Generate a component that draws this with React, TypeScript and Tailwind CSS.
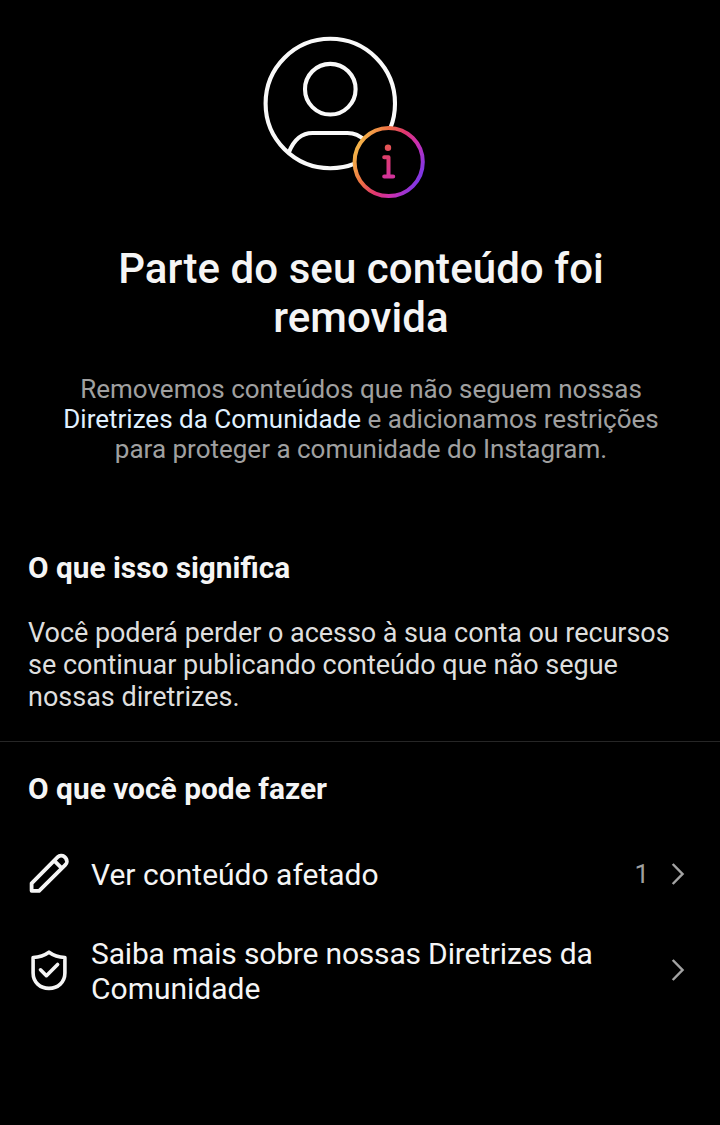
import type { ReactNode } from 'react';

function AccountNotice() {
  return (
    <svg width="190" height="180" viewBox="0 0 190 180" fill="none" role="img" aria-label="Aviso da conta">
      <defs>
        <linearGradient id="ring" gradientUnits="userSpaceOnUse" x1="104" y1="120" x2="173" y2="154">
          <stop offset="0" stopColor="#f5c04a" />
          <stop offset="0.3" stopColor="#ee7043" />
          <stop offset="0.52" stopColor="#e0366f" />
          <stop offset="0.74" stopColor="#c92fb4" />
          <stop offset="1" stopColor="#7038ee" />
        </linearGradient>
        <linearGradient id="glyph" gradientUnits="userSpaceOnUse" x1="134" y1="120" x2="142" y2="152">
          <stop offset="0" stopColor="#e65a50" />
          <stop offset="0.45" stopColor="#dd3a72" />
          <stop offset="1" stopColor="#d2339c" />
        </linearGradient>
      </defs>
      <g stroke="#f9f9f9" strokeWidth="4.1">
        <circle cx="80.3" cy="78.5" r="64.7" />
        <circle cx="80.3" cy="64.2" r="25.3" />
        <path d="M38.8 127.5C43.5 115.5 51 108 62.5 108H97.5C104.5 108 110 110.5 114.5 115.5" />
      </g>
      <circle cx="138.7" cy="137" r="34.1" fill="#000" stroke="url(#ring)" strokeWidth="4" />
      <circle cx="138" cy="122.7" r="3.2" fill="url(#glyph)" />
      <path
        d="M134.2 132.3H138.5V151.6M134.2 151.6H143.2"
        stroke="url(#glyph)"
        strokeWidth="4"
        strokeLinecap="round"
        strokeLinejoin="round"
      />
    </svg>
  );
}

function PencilIcon() {
  return (
    <svg width="40" height="41" viewBox="0 0 40 41" fill="none" stroke="#f5f5f5" strokeWidth="3.8" strokeLinejoin="round">
      <path d="M2.6 37.8V30.4L28.6 4.2C30.6 2.2 33.4 2.2 35.2 3.6L36.8 5.2C38.4 7.2 38.2 9.9 36.3 11.8L10.1 37.8Z" />
      <path d="M25.2 7.6L32.9 15.3" />
    </svg>
  );
}

function ShieldIcon() {
  return (
    <svg width="40" height="41" viewBox="0 0 40 41" fill="none" stroke="#f5f5f5" strokeWidth="3.6" strokeLinejoin="round">
      <path d="M20 2.2C15.5 5.4 10 7.2 4.1 7.5V23C4.1 32 11 38.4 20 38.4S35.9 32 35.9 23V7.5C30 7.2 24.5 5.5 20 2.2Z" />
      <path d="M11.5 19.8L17.4 25.7L28.6 14.5" strokeLinecap="round" />
    </svg>
  );
}

function Chevron() {
  return (
    <svg width="14" height="24" viewBox="0 0 14 24" fill="none" stroke="#a3a3a3" strokeWidth="2.5">
      <path d="M1.7 2L11.5 12L1.7 22" />
    </svg>
  );
}

function Row({ icon, label, children }: { icon: ReactNode; label: ReactNode; children: ReactNode }) {
  return (
    <li className="flex items-start">
      {icon}
      <span className="ml-[22px] mt-1 grow text-[30px] leading-[35px]">{label}</span>
      {children}
    </li>
  );
}

export default function App() {
  return (
    <main className="h-[1125px] w-[720px] overflow-hidden bg-black font-[Roboto,sans-serif] text-[#f5f5f5]">
      <header className="flex flex-col items-center pt-[25px] text-center">
        <div className="mr-[30px]">
          <AccountNotice />
        </div>
        <h1 className="ml-[2px] mt-[39px] text-[42px] font-medium leading-[49px] tracking-[0.06px]">
          Parte do seu conteúdo foi
          <br />
          removida
        </h1>
        <p className="ml-[2px] mt-[32px] text-[26px] leading-[30px] text-[#a0a0a0]">
          Removemos conteúdos que não seguem nossas
          <br />
          <a className="text-[#e0f1ff]">Diretrizes da Comunidade</a> e adicionamos restrições
          <br />
          para proteger a comunidade do Instagram.
        </p>
      </header>

      <section className="mt-[86px] border-b border-[#262626] px-7 pb-[28px]">
        <h2 className="text-[29.8px] font-bold leading-9">O que isso significa</h2>
        <p className="mt-[31px] text-[27px] leading-8 text-[#dedede]">
          <span className="tracking-[-0.05px]">Você poderá perder o acesso à sua conta ou recursos</span>
          <br />
          se continuar publicando conteúdo que não segue
          <br />
          nossas diretrizes.
        </p>
      </section>

      <section className="pt-[29px] pl-[29px] pr-[35px]">
        <h2 className="-ml-px text-[29.9px] font-bold leading-9">O que você pode fazer</h2>
        <ul className="mt-[46px] flex flex-col gap-[38px]">
          <Row icon={<PencilIcon />} label="Ver conteúdo afetado">
            <div className="mt-2 flex items-center gap-[22px] text-[26px] leading-6 text-[#a0a0a0]">
              <span className="mt-px">1</span>
              <Chevron />
            </div>
          </Row>
          <Row
            icon={
              <span className="mt-[18px]">
                <ShieldIcon />
              </span>
            }
            label={
              <>
                <span className="tracking-[-0.18px]">Saiba mais sobre nossas Diretrizes da</span>
                <br />
                Comunidade
              </>
            }
          >
            <div className="mt-[26px]">
              <Chevron />
            </div>
          </Row>
        </ul>
      </section>
    </main>
  );
}
